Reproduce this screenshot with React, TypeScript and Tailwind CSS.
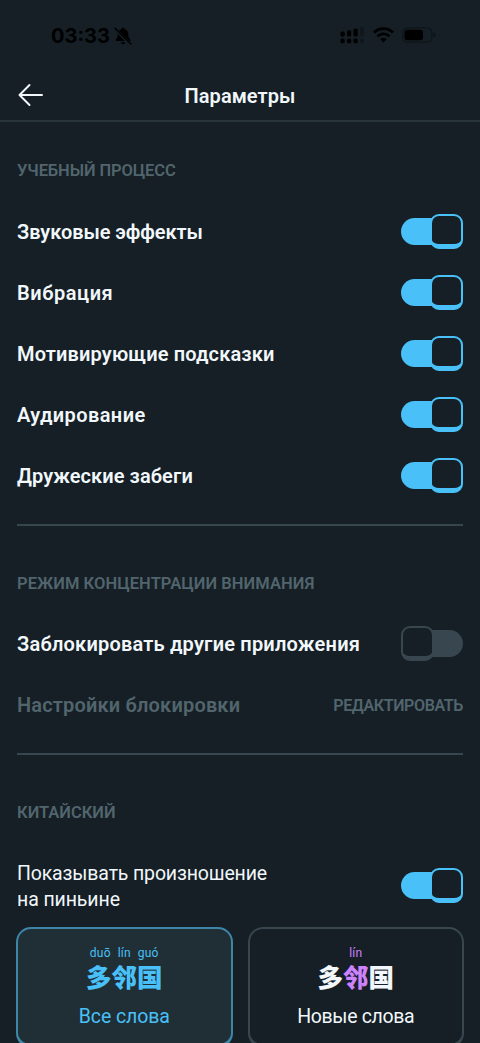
import type { ReactNode } from "react";

function Toggle({ on }: { on: boolean }) {
  return (
    <button
      role="switch"
      aria-checked={on}
      className={`flex h-[35px] w-[62px] shrink-0 items-center ${on ? "flex-row" : "flex-row-reverse"}`}
    >
      <span
        className={`h-[27px] w-[32px] ${on ? "-mr-[3px] rounded-l-full bg-[#49c0f8]" : "-ml-[3px] rounded-r-full bg-[#37464f]"}`}
      />
      <span
        className={`relative h-[35px] w-[33px] rounded-[9px] border-2 border-b-[5px] bg-[#151f25] ${on ? "border-[#49c0f8]" : "border-[#37464f]"}`}
      />
    </button>
  );
}

function SectionTitle({ children, className }: { children: string; className: string }) {
  return (
    <h2 className={`flex h-6 items-center whitespace-nowrap text-[16.5px] font-semibold text-[#52656d] ${className}`}>
      {children}
    </h2>
  );
}

function Row({ label, className, children }: { label: string; className: string; children: ReactNode }) {
  return (
    <div className="flex h-[61px] items-center justify-between">
      <span className={`whitespace-nowrap text-[20px] font-semibold ${className}`}>{label}</span>
      {children}
    </div>
  );
}

function StatusBar() {
  return (
    <div className="flex h-[70px] items-center justify-between pr-[44px] pl-[51px] text-black">
      <div className="flex items-center gap-[4px] pt-px">
        <span className="font-['Inter',sans-serif] text-[20px] leading-6 font-bold">03:33</span>
        <svg width="18" height="18" viewBox="0 0 18 18" fill="currentColor">
          <path d="M9 .8c1 0 1.500.6 1.600 1.400C13.300 3 14.300 5 14.300 7.500c0 2.700.8 3.800 2 5.100v1.500H1.700v-1.500c1.200-1.300 2-2.400 2-5.100C3.700 5 4.700 3 7.400 2.200 7.500 1.400 8 .8 9 .8zM6.800 15.200h4.400C11 16.500 10.200 17.200 9 17.200s-2-.7-2.200-2z" />
          <path d="M.5 1.500 16 17" stroke="#151f25" strokeWidth="3" />
          <path d="M1 1.300 17 17" stroke="currentColor" strokeWidth="1.400" strokeLinecap="round" />
        </svg>
      </div>
      <div className="flex items-center gap-2">
        <svg width="25" height="18" viewBox="0 0 25 18" fill="currentColor">
          <rect x=".5" y="5.500" width="4.200" height="5" rx="1.500" />
          <rect x="7" y="4.300" width="4.200" height="6.200" rx="1.500" />
          <rect x="13.500" y="2.500" width="4.200" height="8" rx="1.500" />
          <rect x=".5" y="12.500" width="4.200" height="4.700" rx="1.500" />
          <rect x="7" y="12.500" width="4.200" height="4.700" rx="1.500" />
          <rect x="13.500" y="12.500" width="4.200" height="4.700" rx="1.500" />
          <g opacity=".22">
            <rect x="20" y="1" width="4" height="9.500" rx="1.500" />
            <rect x="20" y="12.500" width="4" height="4.700" rx="1.500" />
          </g>
        </svg>
        <svg width="21" height="16" viewBox="0 0 21 16" fill="none" stroke="currentColor" strokeWidth="2.800">
          <path d="M1 5.600a13.500 13.500 0 0 1 19 0M4.500 9.300a8.600 8.600 0 0 1 12 0" />
          <path d="M10.500 15.400 7.300 12.200a4.600 4.600 0 0 1 6.400 0z" fill="currentColor" stroke="none" />
        </svg>
        <svg width="34" height="16" viewBox="0 0 34 16" fill="currentColor">
          <rect x=".8" y=".8" width="29" height="14.400" rx="4.800" fill="none" stroke="#0e161a" strokeWidth="1.300" />
          <rect x="2.500" y="2.700" width="18.500" height="10.600" rx="3" />
          <path d="M31.500 5.500c1.500.6 2 1.500 2 2.500s-.5 1.900-2 2.500z" opacity=".4" />
        </svg>
      </div>
    </div>
  );
}

const hanzi = "font-['Noto_Sans_CJK_SC',sans-serif] -mt-px text-[25.5px] leading-[28px] font-black";

export default function App() {
  return (
    <div className="h-[1043px] w-[480px] overflow-hidden bg-[#151f25] font-['Roboto','Noto_Sans',sans-serif] text-[#f1f7fb]">
      <StatusBar />
      <header className="grid h-[52px] grid-cols-[1fr_auto_1fr] items-center border-b-2 border-[#27343b] px-[18px]">
        <svg width="26" height="24" viewBox="0 0 26 24" fill="none" stroke="currentColor" strokeWidth="2" strokeLinecap="round" strokeLinejoin="round">
          <path d="M24 12H1.500M11.500 2 1.500 12l10 10" />
        </svg>
        <h1 className="pt-px text-[20px] font-semibold tracking-[0.050px]">Параметры</h1>
      </header>

      <main className="px-[17px]">
        <section className="h-[404px] border-b-2 border-[#37464f] pt-[37px]">
          <SectionTitle className="mb-[18px] tracking-[-0.100px]">УЧЕБНЫЙ ПРОЦЕСС</SectionTitle>
          <Row label="Звуковые эффекты" className="tracking-[-0.060px]"><Toggle on /></Row>
          <Row label="Вибрация" className="tracking-[0.550px]"><Toggle on /></Row>
          <Row label="Мотивирующие подсказки" className="tracking-[0.140px]"><Toggle on /></Row>
          <Row label="Аудирование" className="tracking-[0.400px]"><Toggle on /></Row>
          <Row label="Дружеские забеги" className="tracking-[0.060px]"><Toggle on /></Row>
        </section>

        <section className="h-[229px] border-b-2 border-[#37464f] pt-[46px]">
          <SectionTitle className="mb-[17px] tracking-[0.070px]">РЕЖИМ КОНЦЕНТРАЦИИ ВНИМАНИЯ</SectionTitle>
          <Row label="Заблокировать другие приложения" className="tracking-[0.200px]"><Toggle on={false} /></Row>
          <Row label="Настройки блокировки" className="tracking-[0.170px] text-[#52656d]">
            <span className="pt-[2px] text-[16px] font-semibold tracking-[-0.370px] text-[#52656d]">РЕДАКТИРОВАТЬ</span>
          </Row>
        </section>

        <section className="pt-[46px]">
          <SectionTitle className="mb-[34px] tracking-[0px]">КИТАЙСКИЙ</SectionTitle>
          <div className="flex h-[52px] items-center justify-between">
            <p className="pt-[4px] text-[19.500px] leading-[26px] tracking-[-0.150px]">
              Показывать произношение
              <br />
              <span className="tracking-[-0.100px]">на пиньине</span>
            </p>
            <Toggle on />
          </div>
          <div className="-mx-px mt-[16px] grid grid-cols-2 gap-[15px]">
            <div className="flex h-[121px] flex-col items-center rounded-[15px] border-2 border-b-4 border-[#3f85a8] bg-[#202f36] pt-[14px] text-[#49c0f8]">
              <div className="flex h-5 items-center gap-[7px] text-[12px] tracking-[0.200px]">
                <span>duō</span>
                <span>lín</span>
                <span>guó</span>
              </div>
              <div className={hanzi}>多邻国</div>
              <div className="mt-[13px] text-[19.500px] leading-7 tracking-[-0.100px]">Все слова</div>
            </div>
            <div className="flex h-[121px] flex-col items-center rounded-[15px] border-2 border-b-4 border-[#37464f] pt-[14px]">
              <div className="flex h-5 items-center text-[12px] tracking-[0.200px] text-[#ce82ff]">lín</div>
              <div className={hanzi}>
                多<span className="text-[#ce82ff]">邻</span>国
              </div>
              <div className="mt-[13px] text-[19.500px] leading-7 tracking-[-0.350px]">Новые слова</div>
            </div>
          </div>
        </section>
      </main>
    </div>
  );
}
